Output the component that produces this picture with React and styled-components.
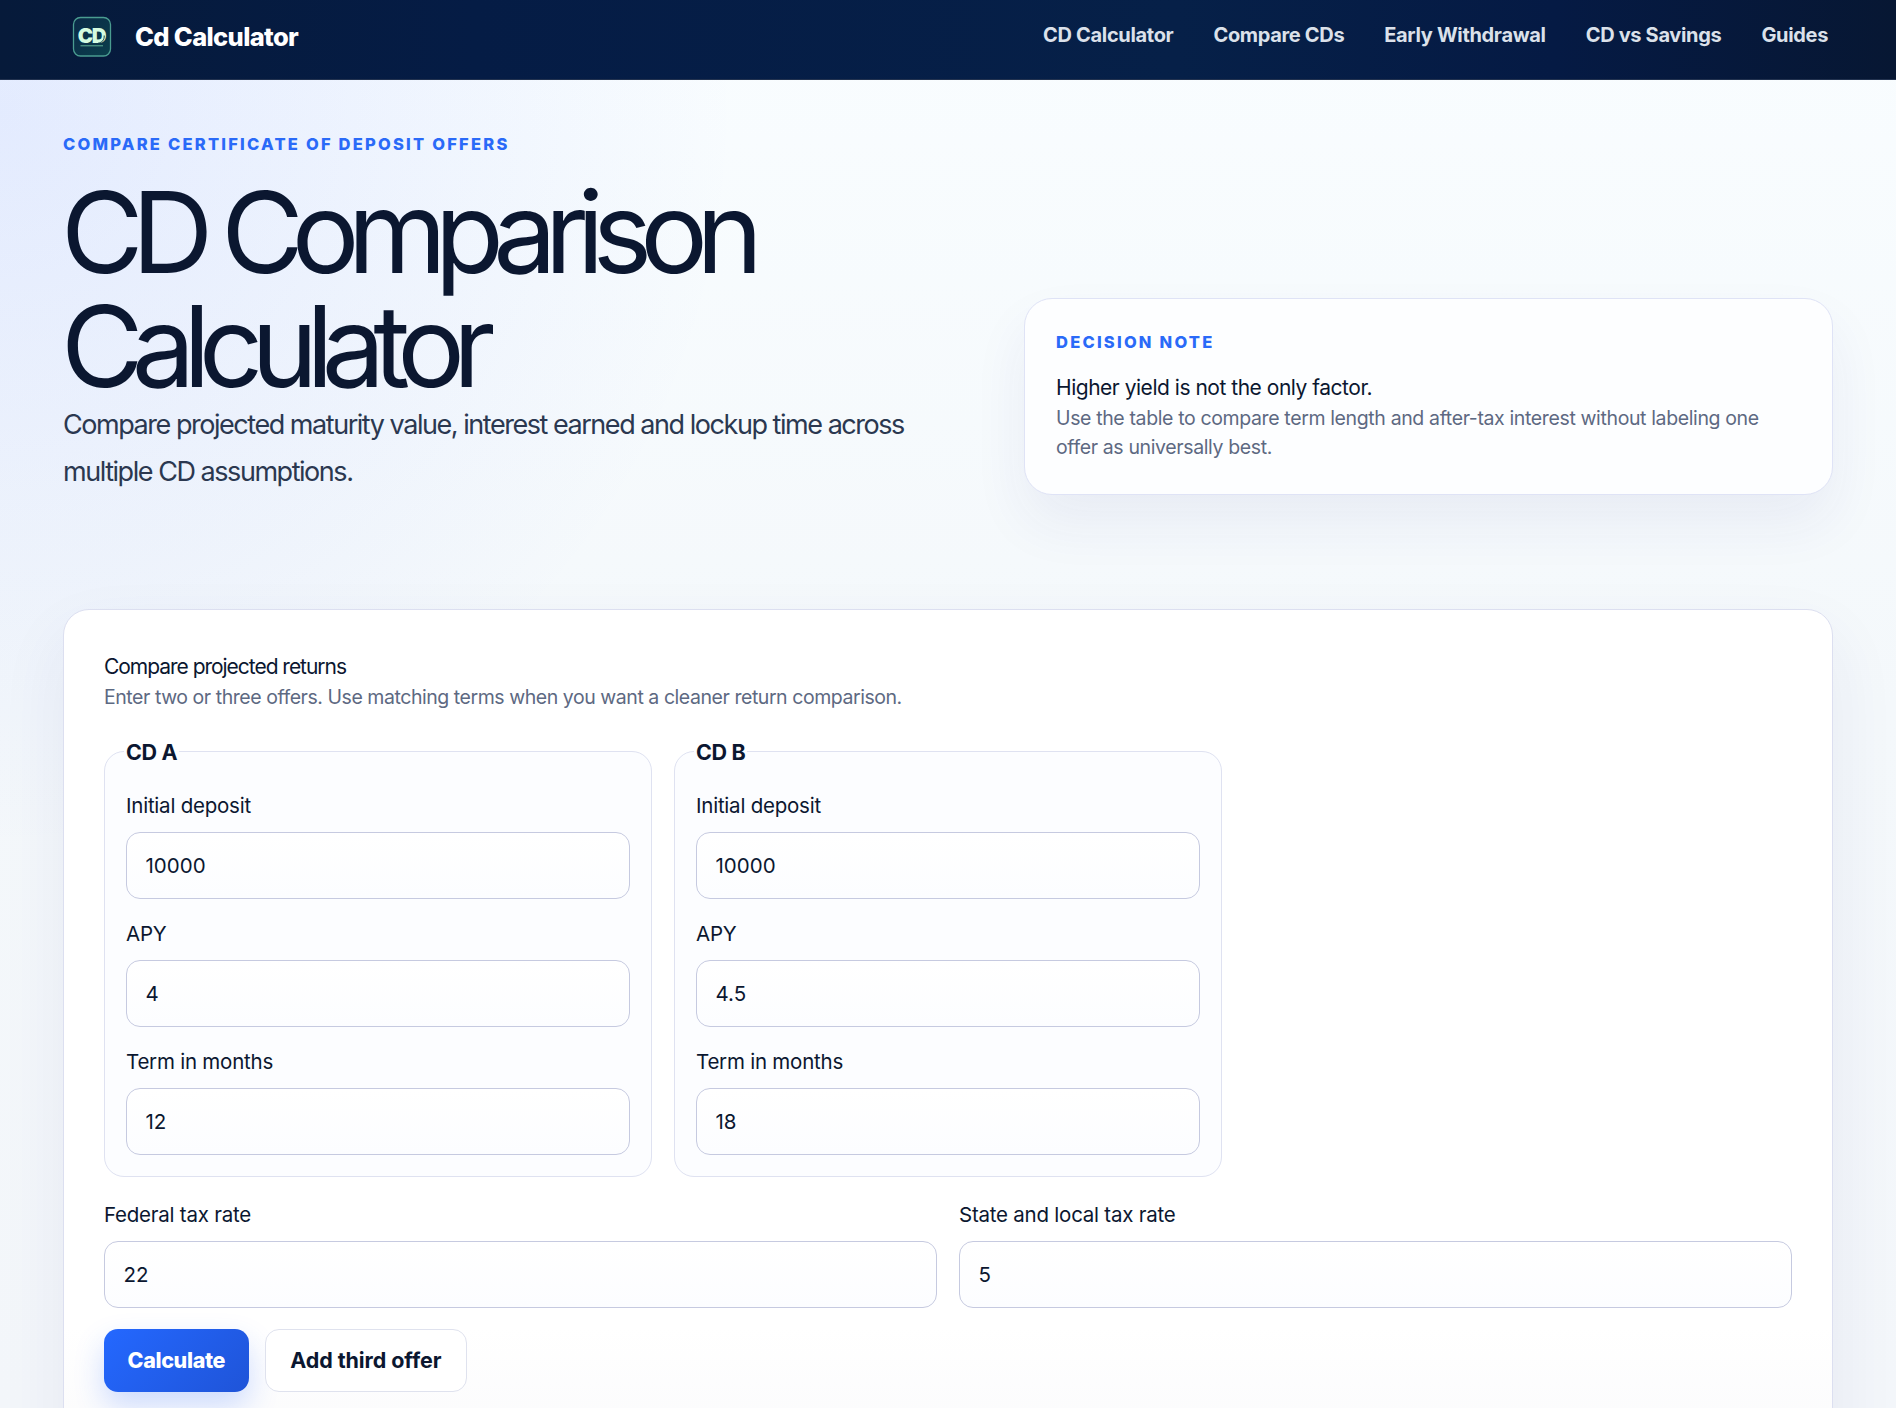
import styled, { createGlobalStyle } from "styled-components";

const NAV = [
  "CD Calculator",
  "Compare CDs",
  "Early Withdrawal",
  "CD vs Savings",
  "Guides",
];

const OFFERS = [
  { name: "CD A", deposit: "10000", apy: "4", term: "12" },
  { name: "CD B", deposit: "10000", apy: "4.5", term: "18" },
];

export default function App() {
  return (
    <Page>
      <GlobalStyle />
      <Header>
        <Brand>
          <Logo />
          Cd Calculator
        </Brand>
        <Nav>
          {NAV.map((item) => (
            <NavLink key={item}>{item}</NavLink>
          ))}
        </Nav>
      </Header>
      <Hero>
        <div>
          <Eyebrow>Compare certificate of deposit offers</Eyebrow>
          <Title>CD Comparison Calculator</Title>
          <Lead>
            Compare projected maturity value, interest earned and lockup time
            across multiple CD assumptions.
          </Lead>
        </div>
        <Note>
          <Eyebrow>Decision note</Eyebrow>
          <NoteTitle>Higher yield is not the only factor.</NoteTitle>
          <Muted>
            Use the table to compare term length and after-tax interest without
            labeling one offer as universally best.
          </Muted>
        </Note>
      </Hero>
      <Panel>
        <PanelTitle>Compare projected returns</PanelTitle>
        <Muted $spacing="-0.45px">
          Enter two or three offers. Use matching terms when you want a cleaner
          return comparison.
        </Muted>
        <Offers>
          {OFFERS.map((offer) => (
            <Offer key={offer.name}>
              <Legend>{offer.name}</Legend>
              <Field label="Initial deposit" value={offer.deposit} />
              <Field label="APY" value={offer.apy} />
              <Field label="Term in months" value={offer.term} />
            </Offer>
          ))}
        </Offers>
        <Taxes>
          <Field label="Federal tax rate" value="22" />
          <Field label="State and local tax rate" value="5" />
        </Taxes>
        <Actions>
          <Button $primary>Calculate</Button>
          <Button>Add third offer</Button>
        </Actions>
      </Panel>
    </Page>
  );
}

function Field({ label, value }) {
  return (
    <Label>
      {label}
      <Input defaultValue={value} />
    </Label>
  );
}

function Logo() {
  return (
    <LogoSvg viewBox="0 0 40 42">
      <defs>
        <linearGradient id="logo-bg" x1="0" y1="0" x2="1" y2="1">
          <stop offset="0" stopColor="#0a2947" />
          <stop offset="1" stopColor="#0b3f4c" />
        </linearGradient>
      </defs>
      <rect
        x="1.5"
        y="1.5"
        width="37"
        height="38.5"
        rx="7"
        fill="url(#logo-bg)"
        stroke="#4a9c90"
        strokeWidth="1.3"
      />
      <text
        x="19.6"
        y="27.2"
        textAnchor="middle"
        fontFamily="Inter, sans-serif"
        fontSize="20.5"
        fontWeight="900"
        letterSpacing="-1.2"
        fill="#d5fbe0"
      >
        CD
      </text>
      <path d="M8.5 29.8H31" stroke="#5fae95" strokeWidth="1" />
      <path
        d="M32.2 19.5c0.3 4.6-2.2 7-6 7.6"
        fill="none"
        stroke="#0b3f4d"
        strokeWidth="1"
      />
    </LogoSvg>
  );
}

const GlobalStyle = createGlobalStyle`
  * {
    box-sizing: border-box;
  }
  body {
    margin: 0;
    font-family: Inter, "Liberation Sans", sans-serif;
    color: #0b1730;
  }
`;
const Page = styled.div`
  height: 100vh;
  overflow: hidden;
  background:
    radial-gradient(circle at 0 110px, rgba(50, 90, 255, 0.105), transparent 740px),
    linear-gradient(180deg, #f9fdff 0%, #f4f8fb 50%, #f3f6fa 100%);
`;
const Header = styled.header`
  display: flex;
  justify-content: space-between;
  align-items: flex-start;
  height: 80px;
  padding: 0 68px 0 72px;
  border-bottom: 1px solid #22324f;
  background: linear-gradient(90deg, #061a3a 0%, #051c45 25%, #062048 62%, #051a44 82%, #071733 100%);
`;
const Brand = styled.div`
  display: flex;
  align-items: center;
  gap: 23px;
  height: 73px;
  color: #fff;
  font-size: 25.5px;
  font-weight: 800;
  letter-spacing: -0.65px;
`;
const LogoSvg = styled.svg`
  width: 40px;
  height: 42px;
`;
const Nav = styled.nav`
  display: flex;
  align-items: center;
  gap: 40px;
  height: 69px;
`;
const NavLink = styled.a`
  color: #dbe1ea;
  font-size: 20px;
  font-weight: 700;
  letter-spacing: -0.33px;
`;
const Hero = styled.section`
  display: grid;
  grid-template-columns: 1fr 809px;
  gap: 40px;
  align-items: end;
  padding: 54px 63px 0;
`;
const Eyebrow = styled.p`
  margin: 0 0 21px;
  color: #2a6af8;
  font-size: 16.5px;
  font-weight: 800;
  line-height: 20px;
  letter-spacing: 2.22px;
  text-transform: uppercase;
`;
const Title = styled.h1`
  max-width: 800px;
  margin: 0 0 0 -2px;
  font-size: 113px;
  font-weight: 430;
  line-height: 114px;
  letter-spacing: -11.9px;
`;
const Lead = styled.p`
  max-width: 880px;
  margin: -2px 0 0;
  color: #2b3850;
  font-size: 27px;
  line-height: 47px;
  letter-spacing: -1.46px;
`;
const Note = styled.aside`
  height: 197px;
  padding: 33px 31px;
  border: 1px solid #dfe3f6;
  border-radius: 28px;
  background: #fdfeff;
  box-shadow: 0 28px 56px rgba(40, 40, 130, 0.065);
`;
const NoteTitle = styled.h2`
  margin: 0;
  font-size: 21px;
  font-weight: 400;
  line-height: 30px;
  letter-spacing: -0.48px;
`;
const Muted = styled.p`
  margin: 1px 0 0;
  color: #5d6982;
  font-size: 19.5px;
  line-height: 29px;
  letter-spacing: ${({ $spacing }) => $spacing || "-0.37px"};
`;
const Panel = styled.section`
  height: 900px;
  margin: 114px 63px 0;
  padding: 42px 40px;
  border: 1px solid #dcdff0;
  border-radius: 26px;
  background: linear-gradient(180deg, #fff 0%, #fff 80%, #fbfbfc 92%);
  box-shadow: 0 28px 68px rgba(40, 40, 130, 0.07);
`;
const PanelTitle = styled(NoteTitle)`
  letter-spacing: -1.03px;
`;
const Offers = styled.div`
  display: grid;
  grid-template-columns: repeat(3, 1fr);
  gap: 22px;
  margin-top: 25px;
`;
const Offer = styled.fieldset`
  display: grid;
  gap: 22.5px;
  min-width: 0;
  margin: 0;
  padding: 28px 21px 21.5px;
  border: 1px solid #dfe2f1;
  border-radius: 20px;
  background: #fcfdff;
`;
const Legend = styled.legend`
  margin-left: -2px;
  padding: 2px 2px 0;
  font-size: 21.5px;
  font-weight: 700;
  line-height: 26px;
  letter-spacing: -0.35px;
`;
const Label = styled.label`
  display: grid;
  gap: 13px;
  font-size: 20.5px;
  line-height: 26px;
  letter-spacing: -0.23px;
`;
const Input = styled.input`
  width: 100%;
  height: 66.5px;
  padding: 0 18.5px;
  border: 1px solid #c6cae0;
  border-radius: 14px;
  outline: none;
  background: linear-gradient(180deg, #fff, #fcfdff);
  color: inherit;
  font: inherit;
  letter-spacing: 0;
`;
const Taxes = styled.div`
  display: grid;
  grid-template-columns: 1fr 1fr;
  gap: 22px;
  margin-top: 25px;
`;
const Actions = styled.div`
  display: flex;
  gap: 16px;
  margin-top: 21.5px;
`;
const Button = styled.button`
  height: 63px;
  padding: 0 ${({ $primary }) => ($primary ? "22.5px" : "24.5px")} 1px;
  border: 1px solid ${({ $primary }) => ($primary ? "transparent" : "#dfe2ee")};
  border-radius: 14px;
  background: ${({ $primary }) =>
    $primary
      ? "linear-gradient(135deg, #2468ff, #1f54d8) border-box"
      : "#fff"};
  box-shadow: ${({ $primary }) =>
    $primary ? "0 14px 30px rgba(37, 99, 255, 0.22)" : "none"};
  color: ${({ $primary }) => ($primary ? "#fff" : "#0b1730")};
  font-family: inherit;
  font-size: 21.5px;
  font-weight: ${({ $primary }) => ($primary ? 800 : 700)};
  letter-spacing: ${({ $primary }) => ($primary ? "-0.35px" : "-0.07px")};
`;
